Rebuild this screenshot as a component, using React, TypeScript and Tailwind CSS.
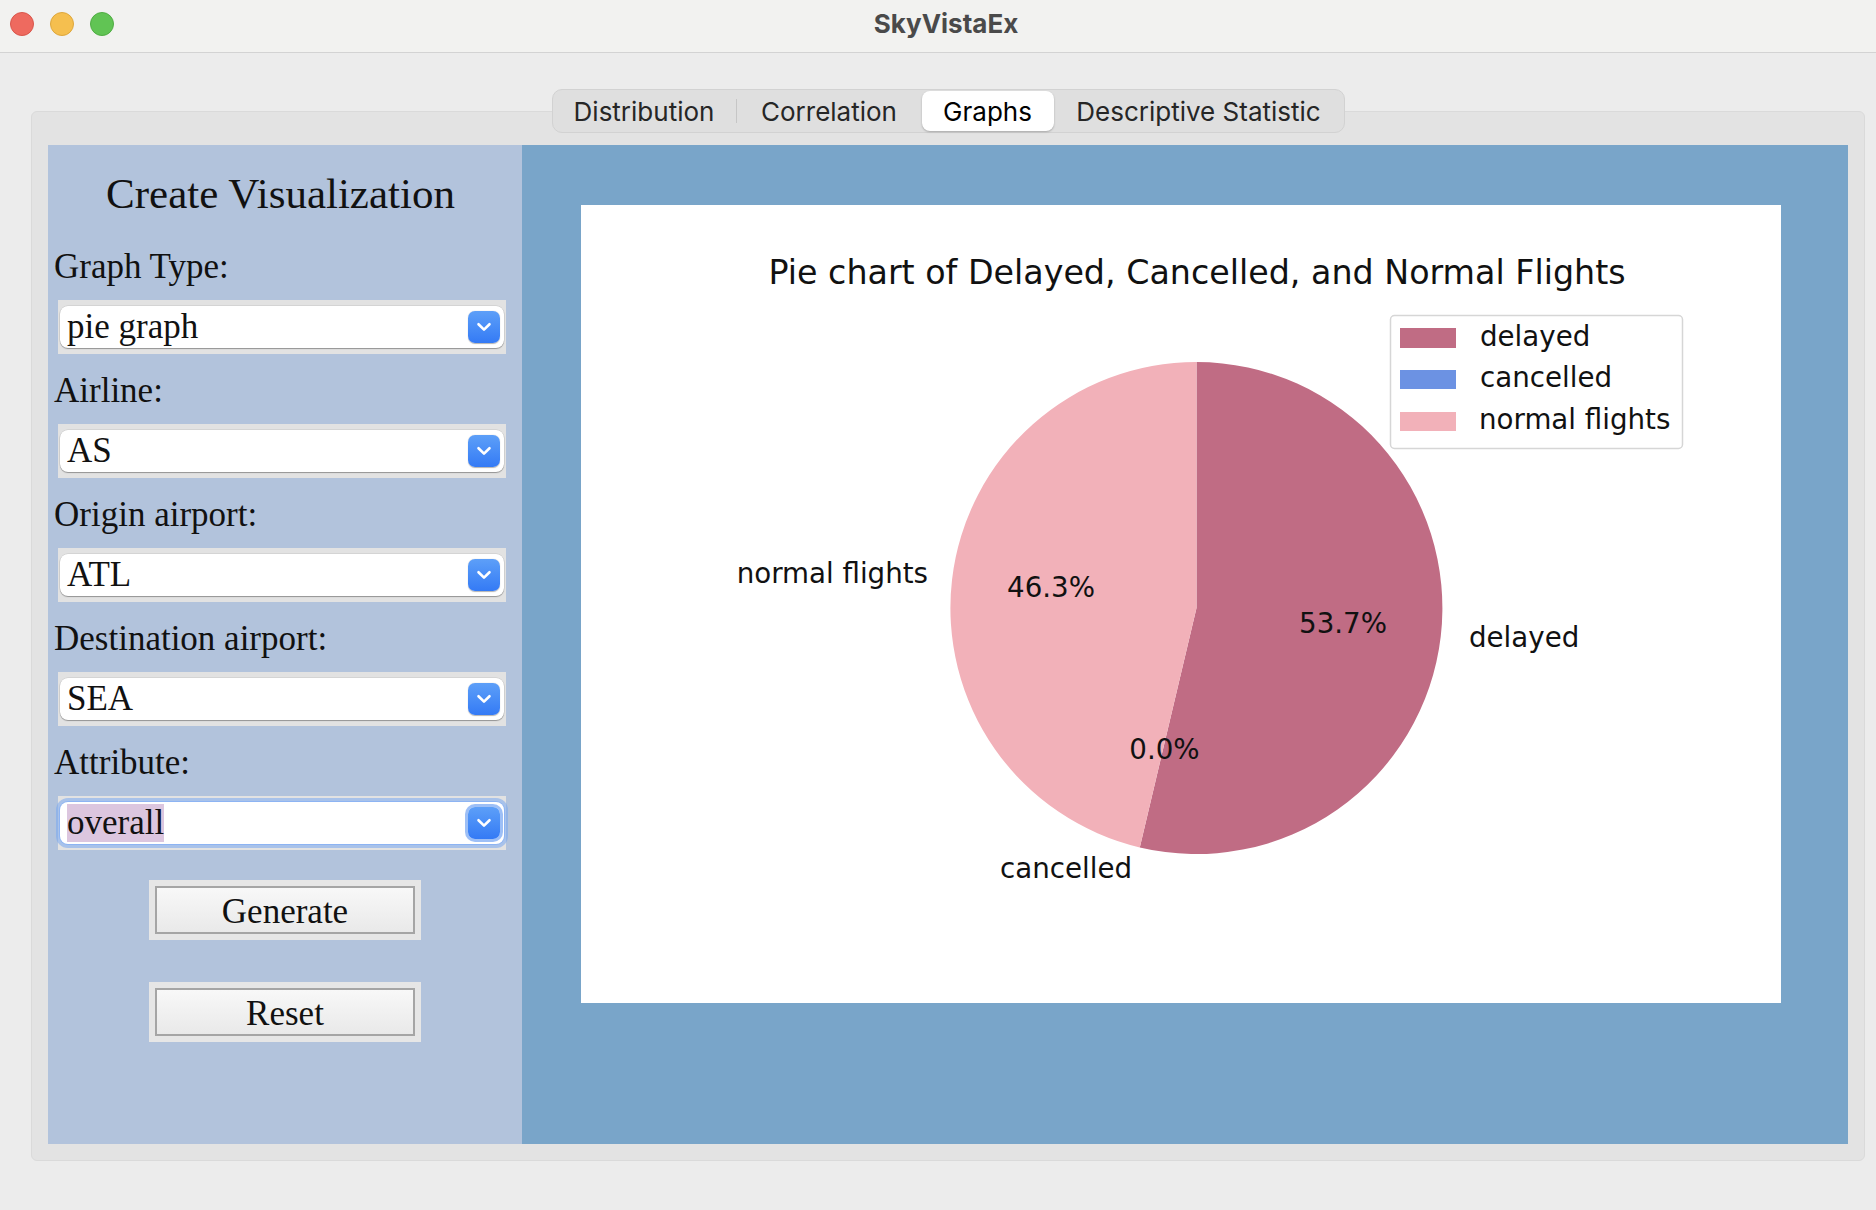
import React from "react";

function Chevron() {
  return (
    <svg width="16" height="10" viewBox="0 0 16 10" fill="none">
      <path d="M2.5 2.2 L8 7.6 L13.5 2.2" stroke="white" strokeWidth="2.6" strokeLinecap="round" strokeLinejoin="round" />
    </svg>
  );
}

function Select({ value, focused }: { value: string; focused?: boolean }) {
  return (
    <div className="ml-[10px] w-[448px] h-[54px] bg-[#e2e2e2] px-[2px] py-[6px]">
      <div
        className={
          focused
            ? "h-[42px] rounded-[8px] bg-white flex items-center justify-between pl-[7px] pr-[4px] shadow-[0_0_0_1px_#8db4f3,0_0_0_4px_rgba(120,168,240,0.55)]"
            : "h-[42px] rounded-[8px] bg-white flex items-center justify-between pl-[7px] pr-[4px] shadow-[0_1px_1px_rgba(0,0,0,0.3),0_0_0_0.5px_rgba(0,0,0,0.12)]"
        }
      >
        <span
          className={
            focused
              ? "inline-block h-[38px] leading-[38px] text-[35px] text-[#111] bg-[#dcc6df]"
              : "inline-block h-[42px] leading-[42px] text-[35px] text-[#111]"
          }
        >
          {value}
        </span>
        <div
          className={
            focused
              ? "w-[32px] h-[32px] rounded-[7px] bg-gradient-to-b from-[#5d9ff8] to-[#347af5] flex items-center justify-center shadow-[0_0_0_3px_rgba(140,180,245,0.85)]"
              : "w-[32px] h-[32px] rounded-[7px] bg-gradient-to-b from-[#5d9ff8] to-[#347af5] flex items-center justify-center shadow-[0_0.5px_1px_rgba(0,0,0,0.3)]"
          }
        >
          <Chevron />
        </div>
      </div>
    </div>
  );
}

function Row({ label, value, focused }: { label: string; value: string; focused?: boolean }) {
  return (
    <div className="pt-[17px]">
      <div className="h-[40px] leading-[40px] text-[35px] pl-[6px] text-[#111]">{label}</div>
      <div className="mt-[13px]">
        <Select value={value} focused={focused} />
      </div>
    </div>
  );
}

function Btn({ label }: { label: string }) {
  return (
    <div className="w-[272px] h-[60px] bg-[#e6e6e6] p-[6px] mx-auto">
      <div className="h-full border-2 border-[#a5a5a5] bg-gradient-to-b from-[#f8f8f8] to-[#e9e9e9] flex items-center justify-center text-[35px] leading-[40px] pt-[3px] text-[#111]">
        {label}
      </div>
    </div>
  );
}

function Chart() {
  return (
    <svg width="1200" height="798" viewBox="0 0 1200 798" className="block bg-white">
      <g fontFamily="'DejaVu Sans', sans-serif" fill="#111">
        <text x="616" y="79" fontSize="33.3" textAnchor="middle">
          Pie chart of Delayed, Cancelled, and Normal Flights
        </text>
        <path d="M615.5 403 L615.5 157 A246 246 0 1 1 558.8 642.4 Z" fill="#C06C84" />
        <path d="M615.5 403 L558.8 642.4 A246 246 0 0 1 615.5 157 Z" fill="#F2B1B9" />
        <text x="888" y="442" fontSize="27.7">delayed</text>
        <text x="762" y="428" fontSize="27.7" textAnchor="middle">53.7%</text>
        <text x="583.5" y="554" fontSize="27.7" textAnchor="middle">0.0%</text>
        <text x="551" y="673" fontSize="27.7" textAnchor="end">cancelled</text>
        <text x="347" y="378" fontSize="27.7" textAnchor="end">normal flights</text>
        <text x="470" y="392" fontSize="27.7" textAnchor="middle">46.3%</text>
        <rect x="809.5" y="110.5" width="292" height="133" rx="4" fill="white" fillOpacity="0.8" stroke="#d6d6d6" strokeWidth="1.5" />
        <rect x="819" y="123" width="56" height="20" fill="#C06C84" />
        <rect x="819" y="165" width="56" height="19" fill="#6C92E3" />
        <rect x="819" y="207" width="56" height="19" fill="#F2B1B9" />
        <text x="899" y="141" fontSize="27.7">delayed</text>
        <text x="899" y="182" fontSize="27.7">cancelled</text>
        <text x="898" y="224" fontSize="27.7">normal flights</text>
      </g>
    </svg>
  );
}

export default function App() {
  return (
    <div className="w-[1876px] h-[1210px] bg-[#ececec] overflow-hidden font-['Inter',sans-serif]">
      <div className="h-[53px] bg-[#f2f2f0] border-b border-[#d3d3d3] grid grid-cols-[1fr_auto_1fr] items-center">
        <div className="flex items-center gap-[16px] pl-[10px] mb-[4px]">
          <div className="w-[24px] h-[24px] rounded-full bg-[#ee6a5f] border border-[#d9564b]" />
          <div className="w-[24px] h-[24px] rounded-full bg-[#f5bf4f] border border-[#dea73c]" />
          <div className="w-[24px] h-[24px] rounded-full bg-[#61c454] border border-[#50ad43]" />
        </div>
        <div className="ml-[16px] text-[26px] font-bold text-[#4a4a4a] mb-[6px]">SkyVistaEx</div>
        <div />
      </div>

      <div className="mt-[36px] relative z-10 flex justify-center pl-[20px]">
        <div className="h-[44px] flex items-center bg-[#dfdfdf] rounded-[10px] border border-[#d2d2d2] text-[26px] text-[#262626]">
          <div className="w-[183px] text-center">Distribution</div>
          <div className="w-px h-[24px] bg-[#c6c6c6]" />
          <div className="w-[185px] text-center">Correlation</div>
          <div className="w-[132px] h-[40px] bg-white rounded-[8px] shadow-[0_1px_2px_rgba(0,0,0,0.25)] flex items-center justify-center text-black">
            Graphs
          </div>
          <div className="w-[290px] text-center">Descriptive Statistic</div>
        </div>
      </div>

      <div className="ml-[31px] w-[1834px] -mt-[22px] bg-[#e3e3e3] rounded-[6px] border border-[#dadada] pt-[33px] pb-[16px] px-[16px] flex">
        <div className="w-[474px] h-[999px] bg-[#b2c3dc] flex flex-col pt-[25px] font-['Liberation_Serif',serif]">
          <div className="h-[48px] leading-[48px] text-[43px] text-center text-[#111] pr-[9px]">Create Visualization</div>
          <div className="mt-[12px]">
            <Row label="Graph Type:" value="pie graph" />
            <Row label="Airline:" value="AS" />
            <Row label="Origin airport:" value="ATL" />
            <Row label="Destination airport:" value="SEA" />
            <Row label="Attribute:" value="overall" focused />
          </div>
          <div className="mt-[30px]">
            <Btn label="Generate" />
          </div>
          <div className="mt-[42px]">
            <Btn label="Reset" />
          </div>
        </div>
        <div className="flex-1 h-[999px] bg-[#79a5c9] pl-[59px] pt-[60px]">
          <Chart />
        </div>
      </div>
    </div>
  );
}
